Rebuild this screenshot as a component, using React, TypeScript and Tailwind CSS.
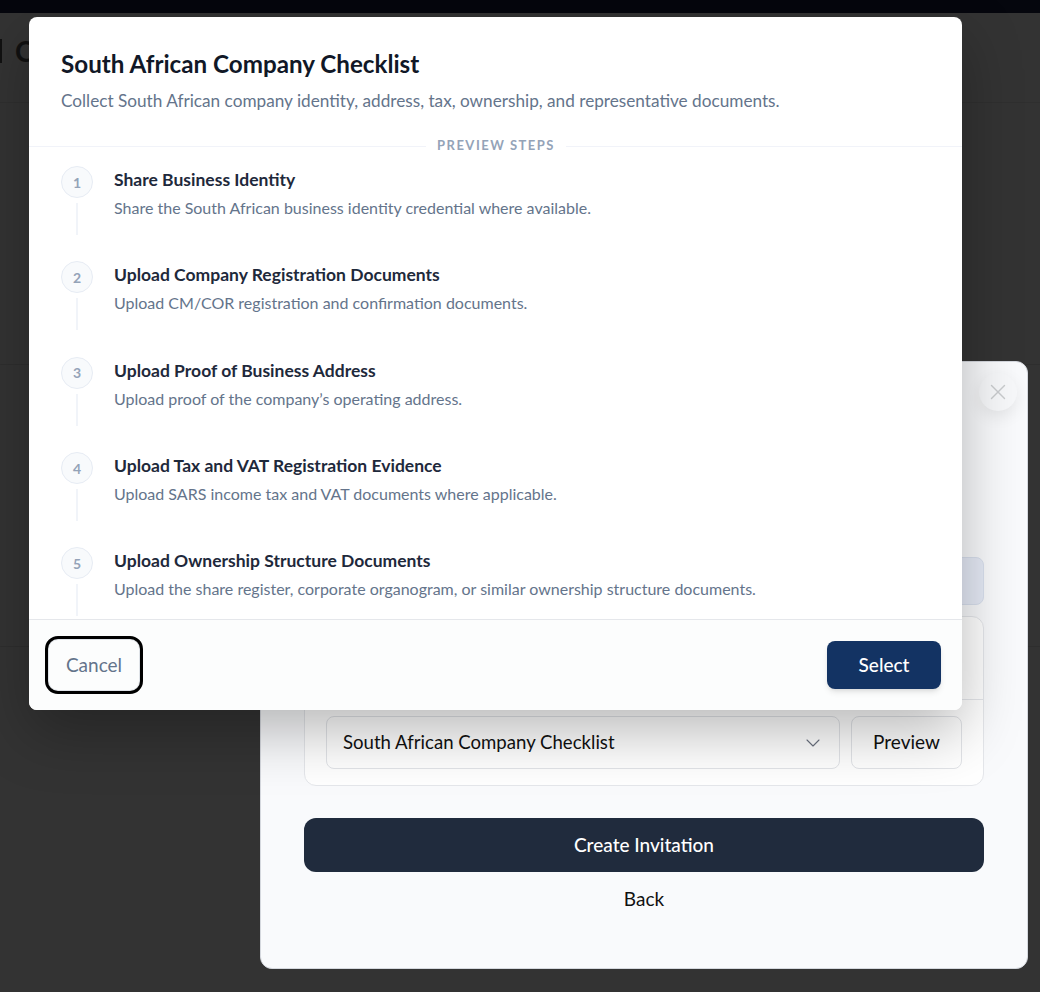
import { ChevronDown, X } from 'lucide-react';

const pasos = [
  { titulo: 'Share Business Identity', texto: 'Share the South African business identity credential where available.' },
  { titulo: 'Upload Company Registration Documents', texto: 'Upload CM/COR registration and confirmation documents.' },
  { titulo: 'Upload Proof of Business Address', texto: 'Upload proof of the company’s operating address.' },
  { titulo: 'Upload Tax and VAT Registration Evidence', texto: 'Upload SARS income tax and VAT documents where applicable.' },
  { titulo: 'Upload Ownership Structure Documents', texto: 'Upload the share register, corporate organogram, or similar ownership structure documents.' },
];

function FondoPagina() {
  return (
    <div className="flex h-full flex-col">
      <div className="h-[13px] shrink-0 bg-[#05060d]" />
      <div className="flex h-[90px] shrink-0 items-center gap-[13px] border-b border-[#2f2f2f] pb-[13px] text-[28px] font-bold text-[#111]">
        <span className="h-6 w-[2px] bg-[#111]" />
        <span>C</span>
      </div>
      <div className="h-[262px] shrink-0 border-b border-[#2e2e2e]" />
      <div className="h-[282px] shrink-0 border-b border-[#2e2e2e]" />
    </div>
  );
}

function ModalInvitacion() {
  return (
    <div className="absolute left-[260px] top-[361px] flex h-[608px] w-[768px] flex-col rounded-xl border border-[#d5d8de] bg-[#f9fafc] px-[43px] pt-[195px]">
      <button
        type="button"
        className="absolute right-[10px] top-[11px] flex h-[38px] w-[38px] items-center justify-center rounded-full bg-[#f7f8fa] text-[#c9cbce] shadow-[0_6px_16px_rgba(0,0,0,0.08)]"
        aria-label="Close"
      >
        <X className="h-[26px] w-[26px]" strokeWidth={1.3} />
      </button>
      <div className="h-[48px] shrink-0 rounded-lg border border-[#d9e0ee] bg-[#e6ebf7]" />
      <div className="mt-[11px] shrink-0 rounded-xl border border-[#e5e7eb] bg-white">
        <div className="h-[83px] border-b border-[#e5e7eb]" />
        <div className="flex gap-[11px] px-[21px] pb-4 pt-4">
          <div className="flex h-[53px] flex-1 items-center justify-between rounded-lg border border-[#e2e4e8] bg-white pl-4 pr-[14px] text-[18.6px] text-[#111]">
            <span>South African Company Checklist</span>
            <ChevronDown className="h-6 w-6 text-[#6b7280]" strokeWidth={1.1} />
          </div>
          <button type="button" className="h-[53px] w-[111px] rounded-lg border border-[#e2e4e8] bg-white text-[19px] text-[#111]">
            Preview
          </button>
        </div>
      </div>
      <button type="button" className="mt-8 h-[54px] shrink-0 rounded-xl bg-[#202b3d] text-[19px] font-medium text-white">
        Create Invitation
      </button>
      <button type="button" className="mt-[13px] text-[19px] text-[#111]">
        Back
      </button>
    </div>
  );
}

function ModalVistaPrevia() {
  return (
    <div className="absolute left-[29px] top-[17px] flex h-[693px] w-[933px] flex-col overflow-hidden rounded-lg bg-white shadow-[0_22px_60px_rgba(0,0,0,0.28)]">
      <div className="shrink-0 px-8 pt-[31px]">
        <h2 className="text-[24.2px] font-bold leading-8 text-[#111827]">South African Company Checklist</h2>
        <p className="mt-[9px] text-[17.2px] leading-6 text-[#64748b]">
          Collect South African company identity, address, tax, ownership, and representative documents.
        </p>
      </div>
      <div className="mt-[23px] flex shrink-0 items-center gap-[11px]">
        <div className="mt-[2px] h-px flex-1 bg-[#f1f3f9]" />
        <span className="text-[13px] font-bold leading-[18px] tracking-[0.115em] text-[#94a3b8]">PREVIEW STEPS</span>
        <div className="mt-[2px] h-px w-[396px] bg-[#f1f3f9]" />
      </div>
      <ul className="min-h-0 flex-1 overflow-hidden px-8 pt-[12px]">
        {pasos.map((paso, indice) => (
          <li key={paso.titulo} className="flex h-[95.35px] gap-[21px]">
            <div className="flex w-8 shrink-0 flex-col items-center">
              <span className="flex h-8 w-8 items-center justify-center rounded-full border border-[#e7ecf4] bg-[#f8fafc] text-[14px] font-bold text-[#94a3b8]">
                {indice + 1}
              </span>
              <span className="mt-[5px] h-[32px] w-[2px] bg-[#f1f4f9]" />
            </div>
            <div className="min-w-0 flex-1 pt-[2px]">
              <p className="text-[17.5px] font-bold leading-6 text-[#1e293b]">{paso.titulo}</p>
              <p className="mt-[5px] text-[16px] leading-[22px] text-[#64748b]">{paso.texto}</p>
            </div>
          </li>
        ))}
      </ul>
      <div className="flex h-[91px] shrink-0 items-center justify-between border-t border-[#e5e7eb] bg-[#fcfdfd] pl-[19px] pr-[21px]">
        <button
          type="button"
          className="h-[52px] w-[92px] rounded-[10px] border border-[#dfe3e8] text-[19px] text-[#64748b] outline-[3px] outline-black"
        >
          Cancel
        </button>
        <button
          type="button"
          className="h-12 w-[114px] rounded-lg bg-[#133363] text-[19px] font-medium text-white shadow-md"
        >
          Select
        </button>
      </div>
    </div>
  );
}

export default function App() {
  return (
    <div className="relative h-[992px] w-[1040px] overflow-hidden bg-[#333333] font-['Lato',sans-serif]">
      <FondoPagina />
      <ModalInvitacion />
      <ModalVistaPrevia />
    </div>
  );
}
